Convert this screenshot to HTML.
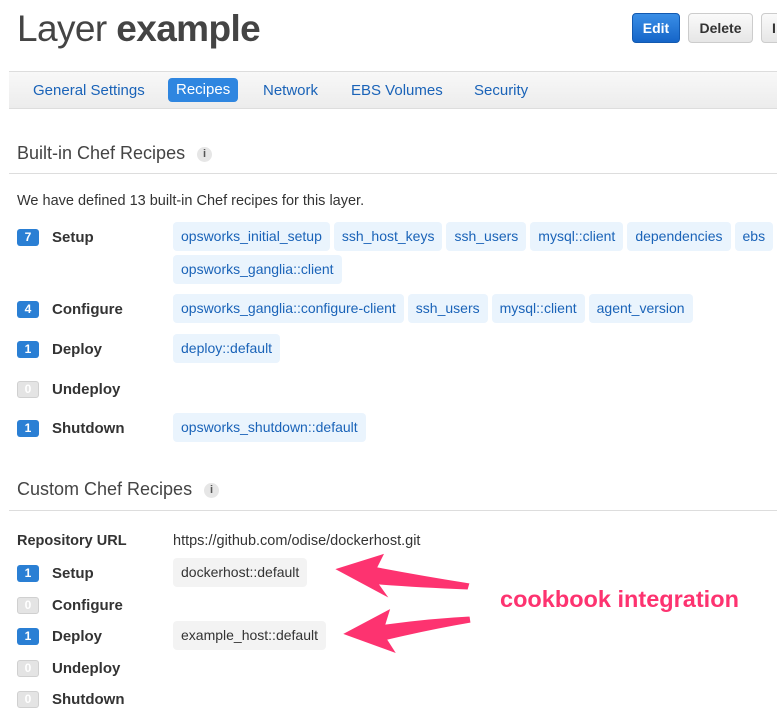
<!DOCTYPE html>
<html><head><meta charset="utf-8"><style>
*{box-sizing:border-box;margin:0;padding:0}
body{width:777px;height:722px;overflow:hidden;background:#fff;font-family:"Liberation Sans",Arial,sans-serif;color:#333;position:relative}
.a{position:absolute}
h1{position:absolute;left:17px;top:8px;font-size:37px;font-weight:normal;color:#444;letter-spacing:-0.6px}
h1 b{font-weight:bold}
.btn{position:absolute;top:13px;height:30px;border-radius:4px;font-size:14px;font-weight:bold;line-height:28px;text-align:center}
.nav{position:absolute;left:9px;top:71px;width:780px;height:38px;background:linear-gradient(#f8f8f8,#ececec);border-top:1px solid #ddd;border-bottom:1px solid #ddd}
.nav span{position:absolute;top:8px;font-size:15px;color:#1a63b8;line-height:22px}
.h2{position:absolute;left:17px;font-size:18px;color:#444}
.info{display:inline-block;width:15px;height:15px;border-radius:50%;background:#e6e6e6;color:#555;font-size:11px;text-align:center;line-height:15px;margin-left:12px;vertical-align:2px;font-weight:bold}
.hr{position:absolute;left:9px;width:770px;height:1px;background:#ddd}
.badge{position:absolute;left:17px;width:22px;height:17px;border-radius:3px;background:#2a7fd4;color:#fff;font-size:12px;font-weight:bold;text-align:center;line-height:17px}
.badge.z{background:#e4e4e4;color:#fff;border:1px solid #d0d0d0;line-height:15px}
.lbl{position:absolute;left:52px;font-size:15px;font-weight:bold;color:#333}
.row{position:absolute;left:173px;display:flex;flex-wrap:wrap;gap:4px;width:610px}
.t{height:29px;line-height:29px;padding:0 8px;background:#eaf4fd;color:#1a63b8;font-size:14px;border-radius:4px;white-space:nowrap}
.t.g{background:#f3f3f3;color:#333}
</style></head><body>
<h1>Layer <b>example</b></h1>
<div class="btn" style="left:632px;width:48px;background:linear-gradient(#3a8ee6,#1565c8);color:#fff;border:1px solid #1259b0">Edit</div>
<div class="btn" style="left:688px;width:65px;background:linear-gradient(#fafafa,#e6e6e6);color:#333;border:1px solid #ccc">Delete</div>
<div class="btn" style="left:761px;width:30px;background:linear-gradient(#fafafa,#e6e6e6);color:#333;border:1px solid #ccc;text-align:left;padding-left:10px">I</div>
<div class="nav">
<span style="left:24px">General Settings</span>
<span style="left:159px;top:6px;height:24px;line-height:24px;background:#2f86e0;color:#fff;border-radius:4px;padding:0 8px">Recipes</span>
<span style="left:254px">Network</span>
<span style="left:342px">EBS Volumes</span>
<span style="left:465px">Security</span>
</div>
<div class="h2" style="top:143px">Built-in Chef Recipes<span class="info">i</span></div>
<div class="hr" style="top:173px"></div>
<div class="a" style="left:17px;top:193px;font-size:14.5px">We have defined 13 built-in Chef recipes for this layer.</div>

<div class="badge" style="top:229px">7</div><div class="lbl" style="top:229px">Setup</div>
<div class="row" style="top:222px"><span class="t">opsworks_initial_setup</span><span class="t">ssh_host_keys</span><span class="t">ssh_users</span><span class="t">mysql::client</span><span class="t">dependencies</span><span class="t">ebs</span><span class="t">opsworks_ganglia::client</span></div>
<div class="badge" style="top:301px">4</div><div class="lbl" style="top:301px">Configure</div>
<div class="row" style="top:294px"><span class="t">opsworks_ganglia::configure-client</span><span class="t">ssh_users</span><span class="t">mysql::client</span><span class="t">agent_version</span></div>
<div class="badge" style="top:341px">1</div><div class="lbl" style="top:341px">Deploy</div>
<div class="row" style="top:334px"><span class="t">deploy::default</span></div>
<div class="badge z" style="top:381px">0</div><div class="lbl" style="top:381px">Undeploy</div>
<div class="badge" style="top:420px">1</div><div class="lbl" style="top:420px">Shutdown</div>
<div class="row" style="top:413px"><span class="t">opsworks_shutdown::default</span></div>

<div class="h2" style="top:479px">Custom Chef Recipes<span class="info">i</span></div>
<div class="hr" style="top:510px"></div>
<div class="lbl" style="left:17px;top:533px;font-size:14.5px">Repository URL</div>
<div class="a" style="left:173px;top:533px;font-size:14.5px">https://github.com/odise/dockerhost.git</div>
<div class="badge" style="top:565px">1</div><div class="lbl" style="top:565px">Setup</div>
<div class="row" style="top:558px"><span class="t g">dockerhost::default</span></div>
<div class="badge z" style="top:597px">0</div><div class="lbl" style="top:597px">Configure</div>
<div class="badge" style="top:628px">1</div><div class="lbl" style="top:628px">Deploy</div>
<div class="row" style="top:621px"><span class="t g">example_host::default</span></div>
<div class="badge z" style="top:660px">0</div><div class="lbl" style="top:660px">Undeploy</div>
<div class="badge z" style="top:691px">0</div><div class="lbl" style="top:691px">Shutdown</div>

<svg class="a" style="left:0;top:0" width="777" height="722">
<path d="M334,569 L385,553 L378,567 Q420,575 470,583 L468,590 Q420,588 380,585 L390,599 Z" fill="#fd3370" stroke="#fff" stroke-width="1"/>
<path d="M342,634 L391,608 L386,624 Q430,618 470,616 L471,623 Q430,630 388,640 L397,654 Z" fill="#fd3370" stroke="#fff" stroke-width="1"/>
<text x="500" y="607" font-family="Liberation Sans, Arial, sans-serif" font-weight="bold" font-size="23.5" fill="#fd3370" stroke="#fff" stroke-width="0.5" style="paint-order:stroke">cookbook integration</text>
</svg>
</body></html>
